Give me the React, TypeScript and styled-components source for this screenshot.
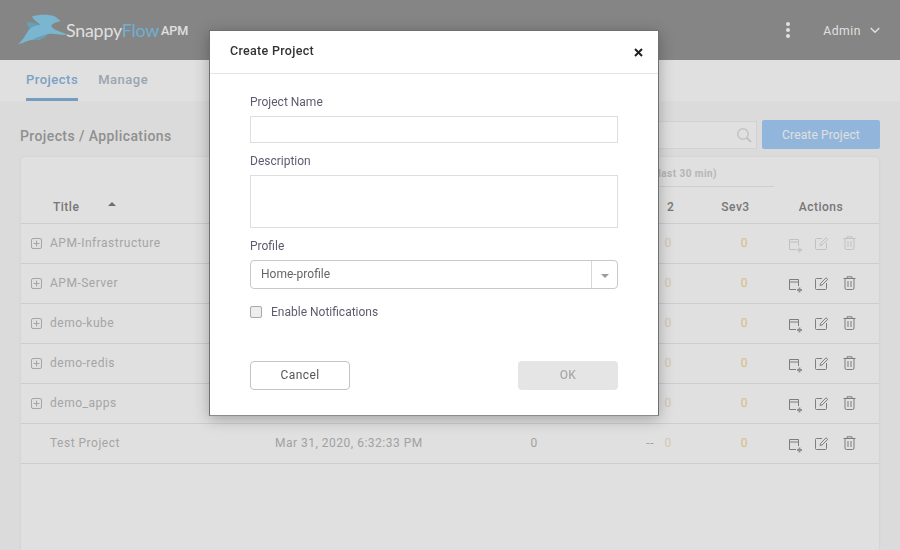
import styled, { createGlobalStyle } from 'styled-components';

const GlobalStyle = createGlobalStyle`
	html, body {
		margin: 0;
		padding: 0;
		height: 100%;
		overflow: hidden;
		background: #fafafa;
		font-family: Roboto, 'Liberation Sans', sans-serif;
	}
	* {
		box-sizing: border-box;
	}
`;

const Page = styled.div`
	width: 900px;
	height: 550px;
	display: flex;
	flex-direction: column;
	overflow: hidden;
`;

const Header = styled.header`
	height: 60px;
	flex: none;
	background: #989898;
	display: flex;
	align-items: center;
	padding: 0 20px 0 16px;
`;

const Brand = styled.div`
	display: flex;
	align-items: center;
	flex: 1;
`;

const BrandName = styled.span`
	font-family: Lato, sans-serif;
	font-size: 17.8px;
	font-weight: 400;
	color: #fff;
	letter-spacing: -0.2px;
`;

const BrandAccent = styled.span`
	color: #80c8ee;
`;

const BrandSuffix = styled.span`
	font-size: 12.6px;
	font-weight: 500;
	color: #fff;
	margin-left: 2px;
	margin-top: 1px;
`;

const MoreDots = styled.div`
	display: flex;
	flex-direction: column;
	gap: 2px;
	margin-right: 33px;
`;

const Dot = styled.span`
	width: 4px;
	height: 4px;
	border-radius: 50%;
	background: #fff;
`;

const UserName = styled.span`
	font-size: 12.2px;
	font-weight: 400;
	letter-spacing: 0.5px;
	color: #fff;
	margin: 2px 9px 0 0;
`;

const TabBar = styled.nav`
	height: 41px;
	flex: none;
	background: #fff;
	display: flex;
	gap: 20px;
	padding-left: 26px;
	box-shadow: 0 1px 1px rgba(0, 0, 0, 0.04);
`;

const Tab = styled.div<{ $active?: boolean }>`
	height: 41px;
	padding-top: 12px;
	font-size: 13px;
	font-weight: 500;
	letter-spacing: 0.5px;
	color: ${p => (p.$active ? '#8cb8df' : '#b0bcc9')};
	border-bottom: 3px solid ${p => (p.$active ? '#84b3dc' : 'transparent')};
`;

const Content = styled.main`
	flex: 1;
	background: #fafafa;
	padding: 19px 20px 0;
	display: flex;
	flex-direction: column;
	min-height: 0;
`;

const Toolbar = styled.div`
	height: 29px;
	flex: none;
	display: flex;
	align-items: center;
	gap: 5px;
`;

const PageTitle = styled.h1`
	flex: 1;
	margin: 0;
	padding-top: 3px;
	font-size: 14px;
	font-weight: 500;
	letter-spacing: 0.4px;
	color: #a4a4a4;
`;

const Search = styled.div`
	width: 200px;
	height: 28px;
	background: #fff;
	border: 1px solid #f0f0f0;
	display: flex;
	align-items: center;
	justify-content: flex-end;
	padding-right: 4px;
`;

const PrimaryButton = styled.button`
	width: 118px;
	height: 29px;
	border: 0;
	border-radius: 2px;
	background: #a7d0fa;
	color: #fff;
	font-family: inherit;
	font-size: 12px;
	letter-spacing: 0.15px;
	padding: 0;
`;

const Card = styled.section`
	flex: 1;
	margin: 8px 1px 0;
	background: #fff;
	border-radius: 4px 4px 0 0;
	box-shadow: 0 0 3px rgba(0, 0, 0, 0.08);
`;

const HeadGrid = styled.div`
	height: 67px;
	display: grid;
	grid-template-columns: 254px 230px 38px 77px 77px 77px 94px 1fr;
	grid-template-rows: 30px 36px;
	border-bottom: 1px solid #eaeaea;
`;

const GroupLabel = styled.div`
	grid-column: 4 / 7;
	grid-row: 1;
	border-bottom: 1px solid #ececec;
	font-size: 10px;
	font-weight: 700;
	letter-spacing: 0.45px;
	color: #cfcfcf;
	text-align: right;
	padding: 11px 57px 0 0;
`;

const HeadCell = styled.div<{ $col: number }>`
	grid-column: ${p => p.$col};
	grid-row: 2;
	font-size: 12px;
	font-weight: 500;
	letter-spacing: 0.5px;
	color: #888;
	padding-top: 13px;
	text-align: center;
`;

const TitleHead = styled(HeadCell)`
	display: flex;
	padding-left: 32px;
`;

const SevTwoHead = styled(HeadCell)`
	word-spacing: 6px;
	padding-right: 6px;
`;

const SortCaret = styled.span`
	width: 0;
	height: 0;
	margin: 2px 0 0 29px;
	border-left: 4px solid transparent;
	border-right: 4px solid transparent;
	border-bottom: 4px solid #7c7c7c;
`;

const Row = styled.div`
	height: 40px;
	padding-bottom: 1px;
	display: grid;
	grid-template-columns: 254px 230px 58px 94px 22px 93px 1fr;
	align-items: center;
	border-bottom: 1px solid #eaeaea;
	font-size: 12px;
	letter-spacing: 0.5px;
	color: #b8b8b8;
`;

const TitleCell = styled.div`
	display: flex;
	align-items: center;
	gap: 7px;
	padding-left: 9px;
	color: #bcbcbc;
`;

const TitleText = styled.span<{ $indent?: boolean }>`
	margin-left: ${p => (p.$indent ? '20px' : '0')};
`;

const CountCell = styled.div`
	text-align: center;
`;

const LastCell = styled.div`
	text-align: right;
	padding-right: 3px;
`;

const SevCell = styled.div`
	text-align: center;
	color: #f3e3c6;
`;

const SevThree = styled.div`
	text-align: right;
	padding-right: 24px;
	color: #f6d699;
`;

const Actions = styled.div<{ $disabled?: boolean }>`
	display: flex;
	align-items: center;
	gap: 12px;
	padding-left: 16px;
	color: #8f8f8f;
	opacity: ${p => (p.$disabled ? 0.3 : 1)};
`;

const AddTableSlot = styled.span`
	display: flex;
	margin-top: 6px;
`;

const TrashSlot = styled.span`
	display: flex;
	margin-left: 2px;
`;

const Backdrop = styled.div`
	position: fixed;
	inset: 0;
	background: rgba(0, 0, 0, 0.12);
`;

const Modal = styled.div`
	position: absolute;
	left: 209px;
	top: 30px;
	width: 450px;
	height: 386px;
	background: #fff;
	border: 1px solid #6f6f6f;
	border-bottom-color: #8c8c8c;
	box-shadow: 0 3px 14px rgba(0, 0, 0, 0.28);
	display: flex;
	flex-direction: column;
`;

const ModalHeader = styled.div`
	height: 43px;
	flex: none;
	display: flex;
	align-items: center;
	justify-content: space-between;
	padding: 0 15px 0 20px;
	border-bottom: 1px solid #e4e4e4;
`;

const ModalTitle = styled.div`
	font-size: 12.5px;
	font-weight: 500;
	letter-spacing: 0.3px;
	color: #333;
	padding-bottom: 4px;
`;

const ModalBody = styled.div`
	flex: 1;
	display: flex;
	flex-direction: column;
	padding: 21px 40px 25px;
`;

const Label = styled.label`
	display: block;
	height: 14px;
	line-height: 14px;
	font-size: 12px;
	color: #5c5c70;
`;

const TextInput = styled.div`
	height: 27px;
	margin: 7px 0 11px;
	border: 1px solid #dedede;
`;

const TextArea = styled.div`
	height: 53px;
	margin: 7px 0 11px;
	border: 1px solid #dedede;
`;

const SelectBox = styled.div`
	height: 29px;
	margin-top: 7px;
	display: flex;
	border: 1px solid #c8c8c8;
	border-radius: 4px;
`;

const SelectValue = styled.div`
	flex: 1;
	padding: 6px 0 0 10px;
	font-size: 12px;
	color: #666;
`;

const SelectArrow = styled.div`
	width: 26px;
	display: flex;
	align-items: center;
	justify-content: center;
	border-left: 1px solid #d6d6d6;
	&::after {
		content: '';
		border-left: 4px solid transparent;
		border-right: 4px solid transparent;
		border-top: 4px solid #9b9b9b;
		margin-top: 2px;
	}
`;

const CheckRow = styled.div`
	display: flex;
	align-items: center;
	gap: 9px;
	margin-top: 16px;
	font-size: 12px;
	color: #5c5c70;
`;

const CheckBox = styled.span`
	width: 12px;
	height: 12px;
	border: 1px solid #a8a8a8;
	border-radius: 2px;
	background: #eee;
`;

const ModalFooter = styled.div`
	margin-top: auto;
	display: flex;
	justify-content: space-between;
`;

const CancelButton = styled.button`
	width: 100px;
	height: 29px;
	border: 1px solid #c4c4c4;
	border-radius: 4px;
	background: #fff;
	font-family: inherit;
	font-size: 12px;
	letter-spacing: 0.4px;
	color: #555;
	padding: 0 0 2px;
`;

const OkButton = styled.button`
	width: 100px;
	height: 29px;
	border: 0;
	border-radius: 4px;
	background: #e5e5e5;
	font-family: inherit;
	font-size: 12px;
	font-weight: 500;
	letter-spacing: 0.4px;
	color: #ababab;
	padding: 0 0 2px;
`;

const RabbitLogo = () => (
	<svg width="50" height="34" viewBox="0 0 150 102">
		<path d="M32 28 C46 27 60 31 74 35 L46 50 C38 44 34 38 32 28 Z" fill="#73b6d2" />
		<path
			d="M6 94 C18 84 28 68 36 54 C42 44 54 38 74 35 C62 28 52 20 48 10 C68 4 100 3 118 11 L134 24 C120 29 108 31 106 39 C108 48 125 54 150 62 L148 66 C125 65 106 60 94 64 C84 78 66 84 52 80 C36 80 24 90 6 94 Z"
			fill="#8bd0ec"
		/>
		<path d="M50 80 C66 84 84 78 94 64 C80 68 64 72 50 80 Z" fill="#73b6d2" />
	</svg>
);

const ChevronDown = () => (
	<svg width="10" height="7" viewBox="0 0 10 7" fill="none" stroke="#fff" strokeWidth="1.4">
		<path d="M0.7 1 L5 5.3 L9.3 1" />
	</svg>
);

const SearchIcon = () => (
	<svg width="16" height="16" viewBox="0 0 16 16" fill="none" stroke="#dedede" strokeWidth="1.5">
		<circle cx="7" cy="7" r="5.2" />
		<path d="M11 11 L15 15" strokeWidth="2" />
	</svg>
);

const ExpandIcon = () => (
	<svg width="13" height="13" viewBox="0 0 13 13" fill="none" stroke="#bdbdbd">
		<rect x="1.5" y="1.5" width="10" height="10" rx="1.5" />
		<path d="M6.5 3.5 V9.5 M3.5 6.5 H9.5" />
	</svg>
);

const CloseIcon = () => (
	<svg width="9" height="9" viewBox="0 0 9 9" fill="none" stroke="#222" strokeWidth="2">
		<path d="M1 1 L8 8 M8 1 L1 8" />
	</svg>
);

const AddTableIcon = () => (
	<svg width="15" height="14" viewBox="0 0 15 14" fill="none" stroke="currentColor">
		<path d="M8 10.5 H1.5 V0.5 H10.5 V7 M1.5 3 H10.5" />
		<path d="M11.5 8.5 V13.5 M9 11 H14" strokeWidth="1.8" opacity="0.8" />
	</svg>
);

const EditIcon = () => (
	<svg width="14" height="13" viewBox="0 0 14 13" fill="none" stroke="currentColor">
		<path d="M7 1.5 H1.5 A1 1 0 0 0 0.5 2.5 V11.5 A1 1 0 0 0 1.5 12.5 H10.5 A1 1 0 0 0 11.5 11.5 V6" />
		<path d="M5 8.5 L5.5 6.5 L11 0.8 L12.8 2.4 L7 8 Z" />
	</svg>
);

const TrashIcon = () => (
	<svg width="13" height="14" viewBox="0 0 13 14" fill="none" stroke="currentColor">
		<path d="M0.5 2.5 H12.5 M4 2 V0.8 H9 V2" />
		<path d="M2 3 V12 A1.5 1.5 0 0 0 3.5 13.5 H9.5 A1.5 1.5 0 0 0 11 12 V3" />
		<path d="M5 5 V11 M8 5 V11" />
	</svg>
);

type Project = {
	title: string;
	expandable: boolean;
	created?: string;
	count?: string;
	last?: string;
	disabled?: boolean;
};

const projects: Project[] = [
	{ title: 'APM-Infrastructure', expandable: true, disabled: true },
	{ title: 'APM-Server', expandable: true },
	{ title: 'demo-kube', expandable: true },
	{ title: 'demo-redis', expandable: true },
	{ title: 'demo_apps', expandable: true },
	{
		title: 'Test Project',
		expandable: false,
		created: 'Mar 31, 2020, 6:32:33 PM',
		count: '0',
		last: '--',
	},
];

const ProjectRow = ({ project }: { project: Project }) => {
	return (
		<Row>
			<TitleCell>
				{project.expandable && <ExpandIcon />}
				<TitleText $indent={!project.expandable}>{project.title}</TitleText>
			</TitleCell>
			<div>{project.created}</div>
			<CountCell>{project.count}</CountCell>
			<LastCell>{project.last}</LastCell>
			<SevCell>0</SevCell>
			<SevThree>0</SevThree>
			<Actions $disabled={project.disabled}>
				<AddTableSlot>
					<AddTableIcon />
				</AddTableSlot>
				<EditIcon />
				<TrashSlot>
					<TrashIcon />
				</TrashSlot>
			</Actions>
		</Row>
	);
};

export default function App() {
	return (
		<>
			<GlobalStyle />
			<Page>
				<Header>
					<Brand>
						<RabbitLogo />
						<BrandName>
							Snappy<BrandAccent>Flow</BrandAccent>
						</BrandName>
						<BrandSuffix>APM</BrandSuffix>
					</Brand>
					<MoreDots>
						<Dot />
						<Dot />
						<Dot />
					</MoreDots>
					<UserName>Admin</UserName>
					<ChevronDown />
				</Header>
				<TabBar>
					<Tab $active>Projects</Tab>
					<Tab>Manage</Tab>
				</TabBar>
				<Content>
					<Toolbar>
						<PageTitle>Projects / Applications</PageTitle>
						<Search>
							<SearchIcon />
						</Search>
						<PrimaryButton>Create Project</PrimaryButton>
					</Toolbar>
					<Card>
						<HeadGrid>
							<TitleHead $col={1}>
								Title
								<SortCaret />
							</TitleHead>
							<GroupLabel>Alerts (last 30 min)</GroupLabel>
							<HeadCell $col={4}>Sev 1</HeadCell>
							<SevTwoHead $col={5}>Sev 2</SevTwoHead>
							<HeadCell $col={6}>Sev3</HeadCell>
							<HeadCell $col={7}>Actions</HeadCell>
						</HeadGrid>
						{projects.map(project => (
							<ProjectRow key={project.title} project={project} />
						))}
					</Card>
				</Content>
			</Page>
			<Backdrop />
			<Modal>
				<ModalHeader>
					<ModalTitle>Create Project</ModalTitle>
					<CloseIcon />
				</ModalHeader>
				<ModalBody>
					<Label>Project Name</Label>
					<TextInput />
					<Label>Description</Label>
					<TextArea />
					<Label>Profile</Label>
					<SelectBox>
						<SelectValue>Home-profile</SelectValue>
						<SelectArrow />
					</SelectBox>
					<CheckRow>
						<CheckBox />
						Enable Notifications
					</CheckRow>
					<ModalFooter>
						<CancelButton>Cancel</CancelButton>
						<OkButton>OK</OkButton>
					</ModalFooter>
				</ModalBody>
			</Modal>
		</>
	);
}
